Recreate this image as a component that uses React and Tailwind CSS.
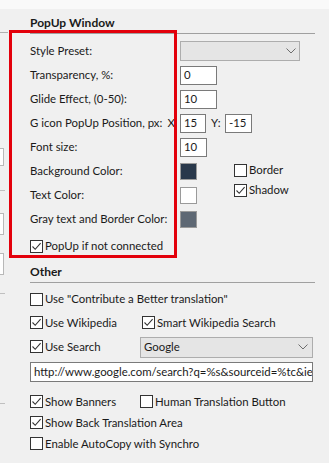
import React from 'react'

const font = { fontFamily: 'Lato, "Noto Sans", "Liberation Sans", Arial, sans-serif' }

function Check({ checked }) {
  return (
    <span className="w-[13px] h-[13px] shrink-0 bg-white border border-[#333] flex items-center justify-center">
      {checked && (
        <svg width="11" height="11" viewBox="0 0 11 11">
          <path d="M1.5 5.5 L4.2 8.3 L9.6 2.2" fill="none" stroke="#333" strokeWidth="1.1" />
        </svg>
      )}
    </span>
  )
}

function CheckRow({ checked, label, className = '' }) {
  return (
    <div className={'flex items-center gap-[2px] whitespace-nowrap ' + className}>
      <Check checked={checked} />
      <span>{label}</span>
    </div>
  )
}

function Chevron() {
  return (
    <svg width="10" height="6" viewBox="0 0 10 6">
      <path d="M0.5 0.5 L5 5 L9.5 0.5" fill="none" stroke="#6d6d6d" strokeWidth="1" />
    </svg>
  )
}

function Field({ value, w }) {
  return (
    <div className={'h-[19px] bg-white border border-[#7a7a7a] flex items-center pl-[3px] ' + w}>{value}</div>
  )
}

function Swatch({ color }) {
  return <div className={'w-[17px] h-[17px] border border-[#9a9a9a] ' + color}></div>
}

function Row({ label, children, extra }) {
  return (
    <div className="h-[24px] flex items-center">
      <div className="w-[150px] flex justify-between pr-[5px] whitespace-nowrap">
        <span>{label}</span>
        {extra}
      </div>
      {children}
    </div>
  )
}

function Section({ title }) {
  return (
    <div className="mr-[14px]">
      <div className="h-[16px] leading-[16px] font-bold text-[12px]">{title}</div>
      <div className="mt-[2px] h-px bg-[#a0a0a0]"></div>
    </div>
  )
}

export default function App() {
  return (
    <div style={font} className="w-[329px] h-[463px] bg-[#f0f0f0] text-[11.4px] text-[#1a1a1a] relative overflow-hidden">
      <div className="h-[9px] bg-[#f9f9f9]"></div>
      <div className="flex">
        <div className="w-[9px] flex flex-col">
          <div className="mt-[23px] h-px w-[8px] bg-[#b0b0b0]"></div>
          <div className="mt-[115px] h-[18px] w-[4px] bg-white border border-l-0 border-[#b8b8b8]"></div>
          <div className="mt-[24px] h-px w-[5px] bg-[#c0c0c0]"></div>
          <div className="mt-[22px] h-[22px] w-[4px] bg-white border border-l-0 border-[#b8b8b8]"></div>
          <div className="mt-[18px] h-[22px] w-[4px] bg-white border border-l-0 border-[#b8b8b8]"></div>
          <div className="mt-[18px] h-px w-[5px] bg-[#c0c0c0]"></div>
          <div className="mt-[109px] h-px w-[5px] bg-[#c0c0c0]"></div>
        </div>

        <div className="flex-1 pl-[21px]">
          <div className="mt-[6px]">
            <Section title="PopUp Window" />
          </div>

          <div className="mt-[5px]">
            <Row label="Style Preset:">
              <div className="w-[120px] h-[20px] bg-[#e5e5e5] border border-[#adadad] flex items-center justify-end pr-[3px]">
                <Chevron />
              </div>
            </Row>
            <Row label="Transparency, %:">
              <Field value="0" w="w-[37px]" />
            </Row>
            <Row label="Glide Effect, (0-50):">
              <Field value="10" w="w-[37px]" />
            </Row>
            <Row label="G icon PopUp Position, px:" extra={<span>X</span>}>
              <Field value="15" w="w-[26px]" />
              <span className="ml-[5px] w-[14px]">Y:</span>
              <Field value="-15" w="w-[27px]" />
            </Row>
            <Row label="Font size:">
              <Field value="10" w="w-[27px]" />
            </Row>

            <div className="flex">
              <div>
                <Row label="Background Color:">
                  <Swatch color="bg-[#29384b]" />
                </Row>
                <Row label="Text Color:">
                  <Swatch color="bg-white" />
                </Row>
                <Row label="Gray text and Border Color:">
                  <Swatch color="bg-[#5e6874]" />
                </Row>
              </div>
              <div className="ml-[37px] flex flex-col">
                <CheckRow checked={false} label="Border" className="h-[20px] mt-[1px]" />
                <CheckRow checked label="Shadow" className="h-[20px]" />
              </div>
            </div>

            <CheckRow checked label="PopUp if not connected" className="h-[24px] mt-[3px]" />
          </div>

          <div className="mt-[6px]">
            <Section title="Other" />
          </div>

          <div className="mt-[4px]">
            <CheckRow checked={false} label='Use "Contribute a Better translation"' className="h-[24px]" />
            <div className="h-[24px] flex items-center">
              <CheckRow checked label="Use Wikipedia" className="w-[112px]" />
              <CheckRow checked label="Smart Wikipedia Search" />
            </div>
            <div className="h-[24px] flex items-center">
              <CheckRow checked label="Use Search" className="w-[110px]" />
              <div className="w-[173px] h-[21px] bg-[#e5e5e5] border border-[#adadad] flex items-center justify-between pl-[3px] pr-[4px]">
                <span>Google</span>
                <Chevron />
              </div>
            </div>
            <div className="mt-[3px] w-[283px] h-[20px] bg-white border border-[#7a7a7a] flex items-center pl-[3px] overflow-hidden whitespace-nowrap">
              http://www.google.com/search?q=%s&sourceid=%tc&ie
            </div>

            <div className="mt-[9px]">
              <div className="h-[21px] flex items-center">
                <CheckRow checked label="Show Banners" className="w-[110px]" />
                <CheckRow checked={false} label="Human Translation Button" />
              </div>
              <CheckRow checked label="Show Back Translation Area" className="h-[21px]" />
              <CheckRow checked={false} label="Enable AutoCopy with Synchro" className="h-[21px]" />
            </div>
          </div>
        </div>
      </div>

      <div className="absolute left-[9px] top-[30px] w-[168px] h-[228px] border-[3px] border-[#e3000b] pointer-events-none"></div>
    </div>
  )
}
